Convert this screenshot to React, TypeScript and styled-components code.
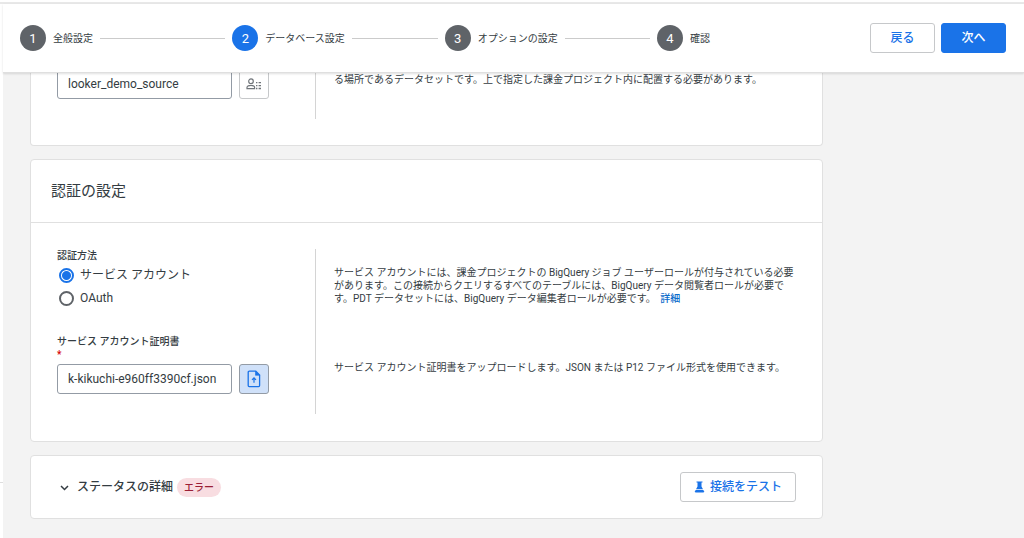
import React from "react";
import styled, { createGlobalStyle } from "styled-components";

const GlobalStyle = createGlobalStyle`
  * { box-sizing: border-box; }
  body {
    margin: 0;
    color: #343c42;
    background: #f3f3f3;
    font-family: Roboto, "Noto Sans CJK JP", sans-serif;
    font-size: 10px;
    line-height: 13px;
  }
  button, input { font: inherit; color: inherit; }
`;

const Page = styled.div`
  display: flex;
  flex-direction: column;
  min-height: 100vh;
`;

const TopEdge = styled.div`
  height: 4px;
  flex: none;
  background: #fff;
  border-bottom: 2px solid #e8e8e8;
`;

const Shell = styled.div`
  display: flex;
  flex: 1;
`;

const Sidebar = styled.div`
  display: flex;
  flex-direction: column;
  justify-content: flex-end;
  flex: none;
  width: 3px;
  background: #fff;
`;

const SidebarFooter = styled.div`
  height: 56px;
  border-top: 1px solid #dedede;
`;

const Content = styled.div`
  flex: 1;
  min-width: 0;
`;

const Header = styled.header`
  position: relative;
  z-index: 1;
  display: flex;
  align-items: center;
  justify-content: space-between;
  height: 69px;
  padding: 0 18px 0 17px;
  gap: 24px;
  background: #fff;
  border-bottom: 1px solid #dfdfdf;
  box-shadow: 0 1px 2px rgba(0, 0, 0, 0.12);
`;

const Steps = styled.ol`
  display: grid;
  grid-template-columns: repeat(3, 1fr) auto;
  flex: 1;
  max-width: 690px;
  margin: 0;
  padding: 0;
  list-style: none;
`;

const Step = styled.li`
  display: flex;
  align-items: center;
  gap: 7px;
  white-space: nowrap;
  &:not(:last-child) { padding-right: 7px; }
  &:not(:last-child)::after {
    content: "";
    flex: 1;
    height: 1px;
    background: #cbcbcb;
  }
`;

const StepNumber = styled.span<{ $active?: boolean }>`
  display: grid;
  place-items: center;
  width: 26px;
  height: 26px;
  border-radius: 50%;
  background: ${(p) => (p.$active ? "#1a73e8" : "#5f6368")};
  color: #fff;
  font-size: 13px;
`;

const Actions = styled.div`
  display: flex;
  gap: 6px;
`;

const Button = styled.button<{ $primary?: boolean }>`
  display: flex;
  align-items: center;
  justify-content: center;
  gap: 5px;
  min-width: 65px;
  height: 30px;
  padding: 0 13px;
  border: 1px solid ${(p) => (p.$primary ? "#1a73e8" : "#c6c8ca")};
  border-radius: 3px;
  background: ${(p) => (p.$primary ? "#1a73e8" : "#fff")};
  color: ${(p) => (p.$primary ? "#fff" : "#1a73e8")};
  font-size: 12px;
  font-weight: 500;
`;

const Main = styled.main`
  display: flex;
  flex-direction: column;
  gap: 13px;
  max-width: 820px;
  margin-top: -4px;
  padding: 0 0 19px 27px;
`;

const Card = styled.section<{ $cut?: boolean }>`
  background: #fff;
  border: 1px solid #e0e0e0;
  border-radius: ${(p) => (p.$cut ? "0 0 4px 4px" : "4px")};
  border-top-width: ${(p) => (p.$cut ? "0" : "1px")};
`;

const CardTitle = styled.h2`
  margin: 0;
  padding: 20px;
  border-bottom: 1px solid #e0e0e0;
  font-size: 15px;
  line-height: 22px;
  font-weight: 400;
`;

const CardBody = styled.div<{ $cut?: boolean }>`
  padding: ${(p) => (p.$cut ? "0 26px 26px" : "26px 26px 27px")};
`;

const Row = styled.div`
  display: grid;
  grid-template-columns: 259px 1fr;
`;

const Field = styled.div<{ $top?: number; $bottom?: number }>`
  padding: ${(p) => p.$top ?? 0}px 0 ${(p) => p.$bottom ?? 0}px;
  border-right: 1px solid #d4d4d4;
`;

const Choices = styled.fieldset`
  margin: 0;
  padding: 0;
  border: 0;
`;

const Legend = styled.legend`
  padding: 0 0 2px;
  font-weight: 500;
`;

const Label = styled.label`
  display: block;
  margin-bottom: 3px;
  font-weight: 500;
`;

const Required = styled.span`
  display: block;
  color: #d50000;
`;

const Choice = styled.label`
  display: flex;
  align-items: center;
  gap: 6px;
  height: 23px;
  padding-left: 2px;
  font-size: 12px;
`;

const Radio = styled.input`
  appearance: none;
  width: 15px;
  height: 15px;
  margin: 0;
  border: 2px solid #5f6368;
  border-radius: 50%;
  background: #fff;
  &:checked {
    border-color: #1a73e8;
    background: radial-gradient(circle, #1a73e8 4px, #fff 5px);
  }
`;

const InputRow = styled.div`
  display: flex;
  gap: 7px;
`;

const TextInput = styled.input`
  width: 175px;
  height: 30px;
  padding: 0 10px;
  border: 1px solid #939ba5;
  border-radius: 3px;
  background: #fff;
  font-size: 12px;
`;

const IconButton = styled.button<{ $tinted?: boolean }>`
  display: grid;
  place-items: center;
  width: 30px;
  height: 30px;
  padding: 0;
  border: 1px solid ${(p) => (p.$tinted ? "#939ba5" : "#c6c8ca")};
  border-radius: 3px;
  background: ${(p) => (p.$tinted ? "#d0e1f9" : "#fff")};
  color: ${(p) => (p.$tinted ? "#1a73e8" : "#70757a")};
`;

const Description = styled.p<{ $start?: boolean }>`
  align-self: ${(p) => (p.$start ? "start" : "center")};
  margin: 0;
  padding: ${(p) => (p.$start ? "4px" : "0")} 0 0 18px;
`;

const Link = styled.a`
  display: inline-block;
  margin-left: 2px;
  color: #0b6bcb;
  font-weight: 500;
  text-decoration: none;
`;

const StatusBar = styled.div`
  display: flex;
  align-items: center;
  justify-content: space-between;
  padding: 16px 26px;
`;

const StatusGroup = styled.div`
  display: flex;
  align-items: center;
  gap: 4px;
`;

const Toggle = styled.button`
  display: flex;
  align-items: center;
  gap: 5px;
  padding: 0;
  border: 0;
  background: none;
  font-size: 12px;
  font-weight: 500;
`;

const Badge = styled.span`
  padding: 3px 7px;
  border-radius: 10px;
  background: #f8dde1;
  color: #9b1f36;
  font-weight: 500;
`;

const PersonListIcon = () => (
  <svg width="16" height="12" viewBox="0 0 16 12" fill="none" stroke="currentColor" strokeWidth="1.2" aria-hidden="true">
    <circle cx="5" cy="3.2" r="2.3" />
    <path d="M1 10.6V9.4C1 8 3 7.3 5 7.3s3.6.7 3.6 2.1v1.2z" />
    <path d="M10 4.7h1.4M12.6 4.7h2.4M10 7.6h1.4M12.6 7.6h2.4M10 10.5h1.4M12.6 10.5h2.4" strokeWidth="1.3" />
  </svg>
);

const UploadIcon = () => (
  <svg width="14" height="18" viewBox="0 0 14 18" fill="none" stroke="currentColor" strokeWidth="1.3" aria-hidden="true">
    <path d="M2.2 1.2H8.8L12.6 5V15.6a1 1 0 0 1-1 1H2.200a1 1 0 0 1-1-1V2.2a1 1 0 0 1 1-1z" />
    <path d="M8.5 1.2V5.3H12.6z" fill="currentColor" strokeWidth=".6" />
    <path d="M7 12.8V8M5 9.8 7 7.8 9 9.8" strokeWidth="1.2" />
  </svg>
);

const FlaskIcon = () => (
  <svg width="11" height="12" viewBox="0 0 11 12" fill="currentColor" aria-hidden="true">
    <path d="M2.5.5H8.5V1.5H7.5V5.4L9 8.3H2L3.5 5.4V1.5H2.5z" />
    <path d="M1.7 8.9H9.3L10 10.3Q10.3 11.6 9.100 11.6H1.9Q.7 11.6 1 10.3z" />
  </svg>
);

const ChevronIcon = () => (
  <svg width="15" height="15" viewBox="0 0 15 15" fill="none" stroke="currentColor" strokeWidth="1.5" aria-hidden="true">
    <path d="M4 6 7.5 9.5 11 6" />
  </svg>
);

const steps = ["全般設定", "データベース設定", "オプションの設定", "確認"];

export default function App() {
  return (
    <Page lang="ja">
      <GlobalStyle />
      <TopEdge />
      <Shell>
        <Sidebar>
          <SidebarFooter />
        </Sidebar>
        <Content>
          <Header>
            <Steps>
              {steps.map((label, i) => (
                <Step key={label}>
                  <StepNumber $active={i === 1}>{i + 1}</StepNumber>
                  {label}
                </Step>
              ))}
            </Steps>
            <Actions>
              <Button type="button">戻る</Button>
              <Button type="button" $primary>次へ</Button>
            </Actions>
          </Header>
          <Main>
            <Card $cut>
              <CardBody $cut>
                <Row>
                  <Field $bottom={20}>
                    <InputRow>
                      <TextInput aria-label="データセット" defaultValue="looker_demo_source" />
                      <IconButton type="button" aria-label="ユーザー属性">
                        <PersonListIcon />
                      </IconButton>
                    </InputRow>
                  </Field>
                  <Description $start>
                    る場所であるデータセットです。上で指定した課金プロジェクト内に配置する必要があります。
                  </Description>
                </Row>
              </CardBody>
            </Card>
            <Card>
              <CardTitle>認証の設定</CardTitle>
              <CardBody>
                <Row>
                  <Field $bottom={11}>
                    <Choices>
                      <Legend>認証方法</Legend>
                      <Choice>
                        <Radio type="radio" name="auth" defaultChecked />
                        サービス アカウント
                      </Choice>
                      <Choice>
                        <Radio type="radio" name="auth" />
                        OAuth
                      </Choice>
                    </Choices>
                  </Field>
                  <Description>
                    サービス アカウントには、課金プロジェクトの BigQuery ジョブ ユーザーロールが付与されている必要があります。この接続からクエリするすべてのテーブルには、BigQuery データ閲覧者ロールが必要です。PDT データセットには、BigQuery データ編集者ロールが必要です。{" "}
                    <Link href="#details">詳細</Link>
                  </Description>
                </Row>
                <Row>
                  <Field $top={14} $bottom={20}>
                    <Label htmlFor="certificate">
                      サービス アカウント証明書
                      <Required>*</Required>
                    </Label>
                    <InputRow>
                      <TextInput id="certificate" defaultValue="k-kikuchi-e960ff3390cf.json" />
                      <IconButton type="button" $tinted aria-label="アップロード">
                        <UploadIcon />
                      </IconButton>
                    </InputRow>
                  </Field>
                  <Description>
                    サービス アカウント証明書をアップロードします。JSON または P12 ファイル形式を使用できます。
                  </Description>
                </Row>
              </CardBody>
            </Card>
            <Card>
              <StatusBar>
                <StatusGroup>
                  <Toggle type="button">
                    <ChevronIcon />
                    ステータスの詳細
                  </Toggle>
                  <Badge>エラー</Badge>
                </StatusGroup>
                <Button type="button">
                  <FlaskIcon />
                  接続をテスト
                </Button>
              </StatusBar>
            </Card>
          </Main>
        </Content>
      </Shell>
    </Page>
  );
}
